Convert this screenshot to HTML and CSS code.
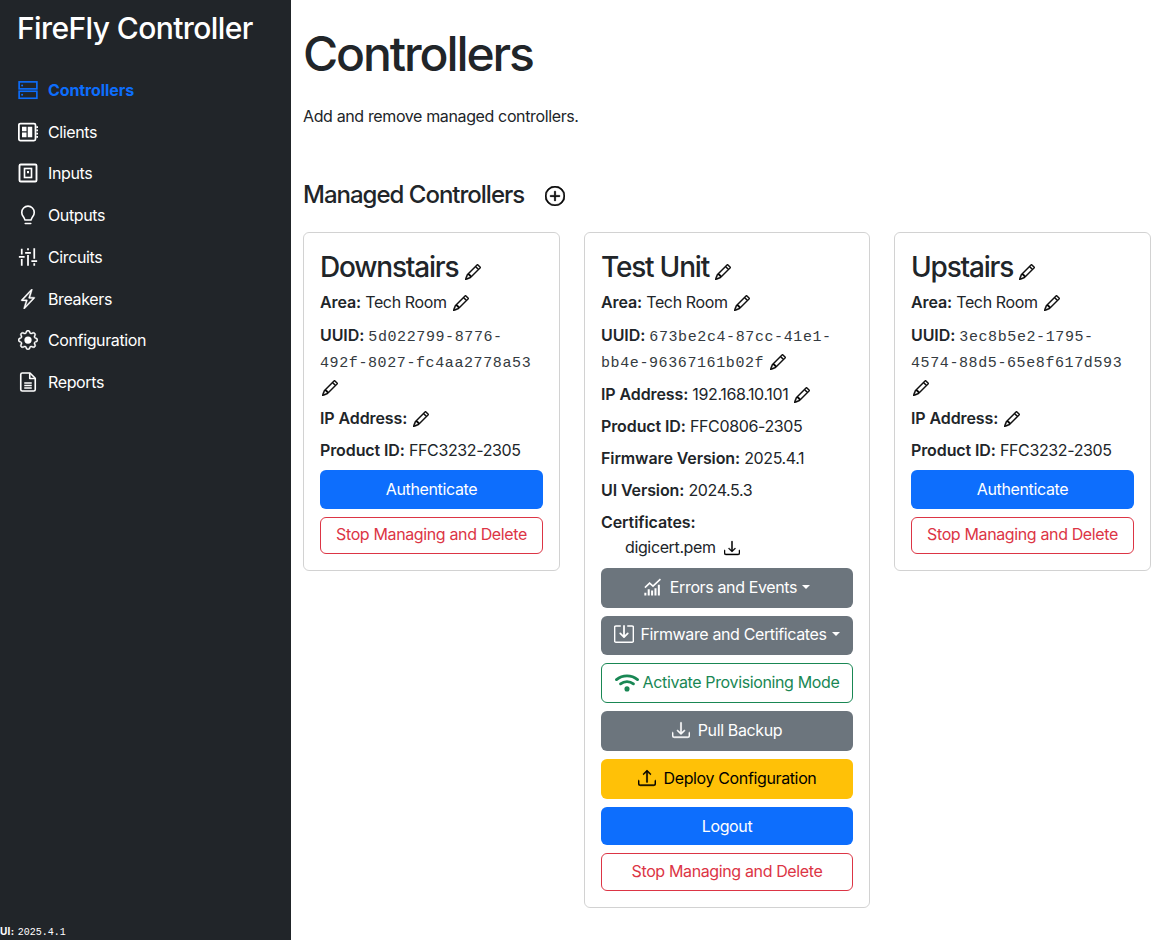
FILE: index.html
```html
<!DOCTYPE html>
<html lang="en">
<head>
    <meta charset="UTF-8">
    <title>FireFly Controller</title>
    <link rel="stylesheet" href="styles.css">
</head>
<body>

<svg class="sprite" xmlns="http://www.w3.org/2000/svg">
    <symbol id="i-pencil" viewBox="0 0 16 16">
        <path fill="currentColor" stroke="currentColor" stroke-width=".5" d="M12.146.146a.5.5 0 0 1 .708 0l3 3a.5.5 0 0 1 0 .708l-10 10a.5.5 0 0 1-.168.11l-5 2a.5.5 0 0 1-.65-.65l2-5a.5.5 0 0 1 .11-.168l10-10zM11.207 2.5 13.5 4.793 14.793 3.5 12.5 1.207 11.207 2.5zm1.586 3L10.5 3.207 4 9.707V10h.5a.5.5 0 0 1 .5.5v.5h.5a.5.5 0 0 1 .5.5v.5h.293l6.5-6.5zm-9.761 5.175-.106.106-1.528 3.821 3.821-1.528.106-.106A.5.5 0 0 1 5 12.5V12h-.5a.5.5 0 0 1-.5-.5V11h-.5a.5.5 0 0 1-.468-.325z"/>
    </symbol>
    <symbol id="i-plus" viewBox="0 0 16 16">
        <g fill="currentColor" stroke="currentColor" stroke-width=".5">
            <path d="M8 15A7 7 0 1 1 8 1a7 7 0 0 1 0 14zm0 1A8 8 0 1 0 8 0a8 8 0 0 0 0 16z"/>
            <path d="M8 4a.5.5 0 0 1 .5.5v3h3a.5.5 0 0 1 0 1h-3v3a.5.5 0 0 1-1 0v-3h-3a.5.5 0 0 1 0-1h3v-3A.5.5 0 0 1 8 4z"/>
        </g>
    </symbol>
    <symbol id="i-download" viewBox="0 0 16 16">
        <g fill="currentColor" stroke="currentColor" stroke-width=".5">
            <path d="M.5 9.9a.5.5 0 0 1 .5.5v2.5a1 1 0 0 0 1 1h12a1 1 0 0 0 1-1v-2.5a.5.5 0 0 1 1 0v2.5a2 2 0 0 1-2 2H2a2 2 0 0 1-2-2v-2.5a.5.5 0 0 1 .5-.5z"/>
            <path d="M7.646 11.854a.5.5 0 0 0 .708 0l3-3a.5.5 0 0 0-.708-.708L8.5 10.293V1.5a.5.5 0 0 0-1 0v8.793L5.354 8.146a.5.5 0 1 0-.708.708l3 3z"/>
        </g>
    </symbol>
    <symbol id="i-upload" viewBox="0 0 16 16">
        <g fill="currentColor" stroke="currentColor" stroke-width=".5">
            <path d="M.5 9.9a.5.5 0 0 1 .5.5v2.5a1 1 0 0 0 1 1h12a1 1 0 0 0 1-1v-2.5a.5.5 0 0 1 1 0v2.5a2 2 0 0 1-2 2H2a2 2 0 0 1-2-2v-2.5a.5.5 0 0 1 .5-.5z"/>
            <path d="M7.646 1.146a.5.5 0 0 1 .708 0l3 3a.5.5 0 0 1-.708.708L8.5 2.707V11.5a.5.5 0 0 1-1 0V2.707L5.354 4.854a.5.5 0 1 1-.708-.708l3-3z"/>
        </g>
    </symbol>
    <symbol id="i-wifi" viewBox="0 0 16 16">
        <g fill="none" stroke="currentColor" stroke-width="1.9" stroke-linecap="round">
            <path d="M1 6.4a11 11 0 0 1 14 0"/>
            <path d="M3.7 9.2a7 7 0 0 1 8.6 0"/>
        </g>
        <circle cx="8" cy="12.6" r="1.7" fill="currentColor"/>
    </symbol>
    <symbol id="i-chart" viewBox="0 0 16 16">
        <g fill="none" stroke="currentColor">
            <path stroke-width="1.4" d="M.8 8.6 5 4.6l3 2.6L14.6 1"/>
            <path stroke-width="1.8" d="M1.2 15.5V13M4.2 15.5V10M7.2 15.5V11M10.2 15.5V9M13.2 15.5V6"/>
        </g>
    </symbol>
    <symbol id="i-firmware" viewBox="0 0 16 16">
        <g fill="none" stroke="currentColor" stroke-width="1.2" stroke-linecap="round" stroke-linejoin="round">
            <path d="M5 1.5H1.5a1 1 0 0 0-1 1v11a1 1 0 0 0 1 1h13a1 1 0 0 0 1-1v-11a1 1 0 0 0-1-1H11"/>
            <path stroke-width="1.4" d="M8 1.5v8.5M5 7.5 8 10.5l3-3"/>
        </g>
    </symbol>
    <symbol id="i-server" viewBox="0 0 16 16">
        <g fill="none" stroke="currentColor" stroke-width="1.3">
            <rect x=".9" y="1.5" width="14.2" height="5.6"/>
            <rect x=".9" y="9" width="14.2" height="5.6"/>
        </g>
        <circle cx="3.3" cy="4.3" r=".8" fill="currentColor"/>
        <circle cx="3.3" cy="11.8" r=".8" fill="currentColor"/>
    </symbol>
    <symbol id="i-board" viewBox="0 0 16 16">
        <rect x=".7" y="1.2" width="13.3" height="13.6" rx="1.2" fill="none" stroke="currentColor" stroke-width="1.4"/>
        <path fill="currentColor" d="M3.2 3.8h3.6v3.6H3.2zM7.8 3.8h3.6v8.4H7.8zM3.2 8.4h3.6v3.8H3.2zM14.6 3.4H16v1.4h-1.4zM14.6 6H16v1.4h-1.4zM14.6 8.6H16V10h-1.4zM14.6 11.2H16v1.4h-1.4z"/>
    </symbol>
    <symbol id="i-input" viewBox="0 0 16 16">
        <g fill="none" stroke="currentColor">
            <rect x="1.2" y="1.2" width="13.6" height="13.6" rx="1" stroke-width="1.5"/>
            <rect x="5.2" y="4.4" width="5.6" height="7.2" stroke-width="1.3"/>
        </g>
        <rect x="7.2" y="6.4" width="1.6" height="1.8" fill="currentColor"/>
    </symbol>
    <symbol id="i-bulb" viewBox="0 0 16 16">
        <g fill="none" stroke="currentColor" stroke-width="1.3" stroke-linecap="round">
            <path d="M5.6 12 4.8 10.2C4.4 9.3 3 8.4 3 5.9a5 5 0 0 1 10 0c0 2.5-1.4 3.4-1.8 4.3L10.4 12z"/>
            <path d="M5.8 14.8h4.4"/>
        </g>
    </symbol>
    <symbol id="i-sliders" viewBox="0 0 16 16">
        <g fill="none" stroke="currentColor" stroke-width="1.4">
            <path d="M3 1.4v4.6M3 9.6v5.4M8 1v1.6M8 6.4V15M13 1v8.4M13 13v2"/>
            <path d="M.7 7.8h4.6M5.7 4.6h4.6M10.7 11.2h4.6"/>
        </g>
    </symbol>
    <symbol id="i-bolt" viewBox="0 0 16 16">
        <path fill="currentColor" stroke="currentColor" stroke-width=".3" d="M11.251.068a.5.5 0 0 1 .227.58L9.677 6.5H13a.5.5 0 0 1 .364.843l-8 8.5a.5.5 0 0 1-.842-.49L6.323 9.5H3a.5.5 0 0 1-.364-.843l8-8.5a.5.5 0 0 1 .615-.09zM4.157 8.5H7a.5.5 0 0 1 .478.647L6.11 13.59l5.732-6.09H9a.5.5 0 0 1-.478-.647L9.89 2.41 4.157 8.5z"/>
    </symbol>
    <symbol id="i-gear" viewBox="0 0 16 16">
        <circle cx="8" cy="8" r="2.9" fill="currentColor"/>
        <path fill="currentColor" stroke="currentColor" stroke-width=".3" d="M9.796 1.343c-.527-1.79-3.065-1.79-3.592 0l-.094.319a.873.873 0 0 1-1.255.52l-.292-.16c-1.64-.892-3.433.902-2.54 2.541l.159.292a.873.873 0 0 1-.52 1.255l-.319.094c-1.79.527-1.79 3.065 0 3.592l.319.094a.873.873 0 0 1 .52 1.255l-.16.292c-.892 1.64.901 3.434 2.541 2.54l.292-.159a.873.873 0 0 1 1.255.52l.094.319c.527 1.79 3.065 1.79 3.592 0l.094-.319a.873.873 0 0 1 1.255-.52l.292.16c1.64.893 3.434-.902 2.54-2.541l-.159-.292a.873.873 0 0 1 .52-1.255l.319-.094c1.79-.527 1.79-3.065 0-3.592l-.319-.094a.873.873 0 0 1-.52-1.255l.16-.292c.893-1.64-.902-3.433-2.541-2.54l-.292.159a.873.873 0 0 1-1.255-.52l-.094-.319zm-2.633.283c.246-.835 1.428-.835 1.674 0l.094.319a1.873 1.873 0 0 0 2.693 1.115l.291-.16c.764-.415 1.6.42 1.184 1.185l-.159.292a1.873 1.873 0 0 0 1.116 2.692l.318.094c.835.246.835 1.428 0 1.674l-.319.094a1.873 1.873 0 0 0-1.115 2.693l.16.291c.415.764-.42 1.6-1.185 1.184l-.291-.159a1.873 1.873 0 0 0-2.693 1.116l-.094.318c-.246.835-1.428.835-1.674 0l-.094-.319a1.873 1.873 0 0 0-2.692-1.115l-.292.16c-.764.415-1.6-.42-1.184-1.185l.159-.291A1.873 1.873 0 0 0 1.945 8.93l-.319-.094c-.835-.246-.835-1.428 0-1.674l.319-.094A1.873 1.873 0 0 0 3.06 4.377l-.16-.292c-.415-.764.42-1.6 1.185-1.184l.292.159a1.873 1.873 0 0 0 2.692-1.115l.094-.319z"/>
    </symbol>
    <symbol id="i-file" viewBox="0 0 16 16">
        <g fill="none" stroke="currentColor" stroke-width="1.3" stroke-linejoin="round">
            <path d="M9.6.8H3.4a1.2 1.2 0 0 0-1.2 1.2v12a1.2 1.2 0 0 0 1.2 1.2h9.2a1.2 1.2 0 0 0 1.2-1.2V5z"/>
            <path d="M9.4 1v4.2h4.2"/>
            <path d="M5 8.8h6M5 10.8h6M5 12.8h6"/>
        </g>
    </symbol>
</svg>

<div class="layout">
    <aside class="sidebar">
        <div class="brand">FireFly Controller</div>
        <nav class="side-nav">
            <a class="nav-link active" href="#"><svg class="nav-icon"><use href="#i-server"/></svg>Controllers</a>
            <a class="nav-link" href="#"><svg class="nav-icon"><use href="#i-board"/></svg>Clients</a>
            <a class="nav-link" href="#"><svg class="nav-icon"><use href="#i-input"/></svg>Inputs</a>
            <a class="nav-link" href="#"><svg class="nav-icon"><use href="#i-bulb"/></svg>Outputs</a>
            <a class="nav-link" href="#"><svg class="nav-icon"><use href="#i-sliders"/></svg>Circuits</a>
            <a class="nav-link" href="#"><svg class="nav-icon"><use href="#i-bolt"/></svg>Breakers</a>
            <a class="nav-link" href="#"><svg class="nav-icon"><use href="#i-gear"/></svg>Configuration</a>
            <a class="nav-link" href="#"><svg class="nav-icon"><use href="#i-file"/></svg>Reports</a>
        </nav>
        <div class="ui-version"><b>UI:</b> <code>2025.4.1</code></div>
    </aside>

    <main class="content">
        <h1>Controllers</h1>
        <p class="lead-text">Add and remove managed controllers.</p>

        <h4 class="section-title">Managed Controllers <svg class="icon-add"><use href="#i-plus"/></svg></h4>

        <div class="card-row">
            <section class="card">
                <h3>Downstairs <svg class="icon-edit-lg"><use href="#i-pencil"/></svg></h3>
                <p><b>Area:</b> Tech Room <svg class="icon-edit"><use href="#i-pencil"/></svg></p>
                <p class="uuid uuid-long"><b>UUID:</b> <code>5d022799-8776-492f-8027-fc4aa2778a53</code> <svg class="icon-edit"><use href="#i-pencil"/></svg></p>
                <p><b>IP Address:</b> <svg class="icon-edit"><use href="#i-pencil"/></svg></p>
                <p><b>Product ID:</b> FFC3232-2305</p>
                <button class="btn btn-blue">Authenticate</button>
                <button class="btn btn-outline-red">Stop Managing and Delete</button>
            </section>

            <section class="card">
                <h3>Test Unit <svg class="icon-edit-lg"><use href="#i-pencil"/></svg></h3>
                <p><b>Area:</b> Tech Room <svg class="icon-edit"><use href="#i-pencil"/></svg></p>
                <p class="uuid"><b>UUID:</b> <code>673be2c4-87cc-41e1-bb4e-96367161b02f</code> <svg class="icon-edit"><use href="#i-pencil"/></svg></p>
                <p><b>IP Address:</b> 192.168.10.101 <svg class="icon-edit"><use href="#i-pencil"/></svg></p>
                <p><b>Product ID:</b> FFC0806-2305</p>
                <p><b>Firmware Version:</b> 2025.4.1</p>
                <p><b>UI Version:</b> 2024.5.3</p>
                <div class="certs">
                    <b>Certificates:</b>
                    <div class="cert-item">digicert.pem <svg class="icon-save"><use href="#i-download"/></svg></div>
                </div>
                <button class="btn btn-gray"><svg class="btn-icon"><use href="#i-chart"/></svg>Errors and Events<span class="caret"></span></button>
                <button class="btn btn-gray"><svg class="btn-icon firmware"><use href="#i-firmware"/></svg>Firmware and Certificates<span class="caret"></span></button>
                <button class="btn btn-outline-green"><svg class="btn-icon wifi"><use href="#i-wifi"/></svg>Activate Provisioning Mode</button>
                <button class="btn btn-gray"><svg class="btn-icon"><use href="#i-download"/></svg>Pull Backup</button>
                <button class="btn btn-yellow"><svg class="btn-icon"><use href="#i-upload"/></svg>Deploy Configuration</button>
                <button class="btn btn-blue">Logout</button>
                <button class="btn btn-outline-red">Stop Managing and Delete</button>
            </section>

            <section class="card">
                <h3>Upstairs <svg class="icon-edit-lg"><use href="#i-pencil"/></svg></h3>
                <p><b>Area:</b> Tech Room <svg class="icon-edit"><use href="#i-pencil"/></svg></p>
                <p class="uuid uuid-long"><b>UUID:</b> <code>3ec8b5e2-1795-4574-88d5-65e8f617d593</code> <svg class="icon-edit"><use href="#i-pencil"/></svg></p>
                <p><b>IP Address:</b> <svg class="icon-edit"><use href="#i-pencil"/></svg></p>
                <p><b>Product ID:</b> FFC3232-2305</p>
                <button class="btn btn-blue">Authenticate</button>
                <button class="btn btn-outline-red">Stop Managing and Delete</button>
            </section>
        </div>
    </main>
</div>

</body>
</html>
```

FILE: styles.css
```css
* {
    box-sizing: border-box;
}
body {
    margin: 0;
    font-family: Inter, "Liberation Sans", sans-serif;
    font-size: 16px;
    line-height: 24px;
    letter-spacing: -0.37px;
    color: #212529;
    background-color: #fff;
}
code {
    font-family: "Liberation Mono", monospace;
    letter-spacing: 0;
}
.sprite {
    display: none;
}
.layout {
    display: flex;
    min-height: 100vh;
}

/* sidebar */
.sidebar {
    width: 291px;
    flex-shrink: 0;
    display: flex;
    flex-direction: column;
    background-color: #212529;
    color: #fff;
}
.brand {
    padding: 10px 17px 0;
    font-size: 30px;
    line-height: 36px;
    font-weight: 500;
    letter-spacing: -0.6px;
}
.side-nav {
    display: flex;
    flex-direction: column;
    margin-top: 23px;
}
.nav-link {
    display: flex;
    align-items: center;
    gap: 10px;
    height: 41.75px;
    padding-left: 18px;
    color: #fff;
    text-decoration: none;
}
.nav-link.active {
    color: #0d6efd;
    font-weight: 700;
    letter-spacing: -0.1px;
}
.nav-icon {
    width: 20px;
    height: 20px;
}
.ui-version {
    margin-top: auto;
    font-size: 10px;
    line-height: 16px;
    height: 17px;
}
.ui-version b {
    font-weight: 700;
    letter-spacing: 0.3px;
    margin-right: 1px;
}

/* main area */
.content {
    flex: 1;
    padding: 25px 12px 0;
}
h1 {
    margin: 0;
    font-size: 48px;
    line-height: 58px;
    font-weight: 500;
    letter-spacing: -2.1px;
}
.lead-text {
    margin: 21px 0 0;
}
.section-title {
    margin: 52px 0 23px;
    font-size: 24px;
    line-height: 29px;
    font-weight: 500;
    letter-spacing: -1px;
    display: flex;
    align-items: center;
    gap: 21px;
}
.icon-add {
    width: 20px;
    height: 20px;
    margin-top: 3px;
    color: #000;
}
.card-row {
    display: grid;
    grid-template-columns: 257px 286px 257px;
    gap: 24px;
    align-items: start;
}
.card {
    border: 1px solid rgba(0, 0, 0, 0.175);
    border-radius: 6px;
    padding: 16px;
}
.card h3 {
    margin: 2px 0 6px;
    font-size: 28px;
    line-height: 33px;
    font-weight: 500;
    letter-spacing: -1.2px;
}
.card p {
    margin: 0 0 8px;
}
.card b {
    font-weight: 600;
    letter-spacing: -0.1px;
}
.uuid {
    line-height: 26px;
}
.uuid code {
    font-size: 15px;
    letter-spacing: 0.6px;
    line-height: 1;
    color: #343a40;
}
.card .uuid-long {
    margin-bottom: 6px;
}
.icon-edit-lg {
    width: 16px;
    height: 16px;
    vertical-align: -3px;
    color: #000;
}
.icon-edit {
    width: 16px;
    height: 16px;
    vertical-align: -3px;
    margin-left: 2px;
    color: #000;
}
.icon-save {
    width: 16px;
    height: 16px;
    vertical-align: -3px;
    margin-left: 4px;
    color: #000;
}
.certs {
    margin-bottom: 8px;
}
.cert-item {
    padding-left: 24px;
    line-height: 26px;
}

/* buttons */
.btn {
    display: flex;
    align-items: center;
    justify-content: center;
    width: 100%;
    height: 37.5px;
    margin-top: 8px;
    padding: 0 12px;
    border: 1px solid transparent;
    border-radius: 6px;
    font-family: inherit;
    font-size: 16px;
    line-height: 24px;
    letter-spacing: inherit;
    white-space: nowrap;
}
.card .btn:first-of-type {
    margin-top: 0;
}
.btn-icon {
    width: 18px;
    height: 18px;
    margin-right: 8px;
}
.btn-icon.firmware {
    width: 20px;
    height: 20px;
    margin-right: 6px;
}
.btn-icon.wifi {
    width: 24px;
    height: 24px;
    margin-right: 4px;
}
.btn-blue {
    height: 38.5px;
    background-color: #0d6efd;
    color: #fff;
}
.btn-gray {
    height: 39.5px;
    padding-bottom: 2px;
    background-color: #6c757d;
    color: #fff;
}
.btn-yellow {
    height: 40px;
    padding-bottom: 2px;
    background-color: #ffc107;
    color: #000;
}
.btn-outline-red {
    padding-bottom: 2px;
    background-color: #fff;
    border-color: #dc3545;
    color: #dc3545;
}
.btn-outline-green {
    height: 40px;
    padding-bottom: 2px;
    background-color: #fff;
    border-color: #198754;
    color: #198754;
}
.caret {
    margin-left: 5px;
    border-top: 4px solid currentColor;
    border-left: 4px solid transparent;
    border-right: 4px solid transparent;
}
```
